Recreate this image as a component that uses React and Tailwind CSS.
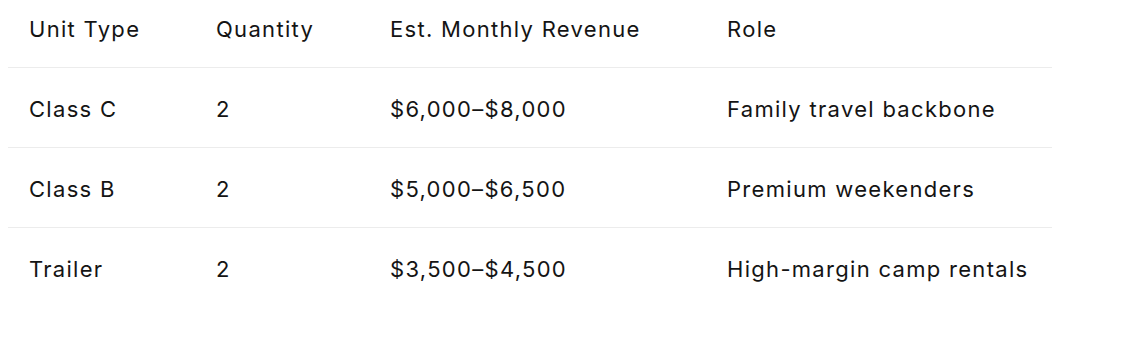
import React from 'react';

const rows = [
  { type: 'Class C', qty: '2', revenue: '$6,000–$8,000', role: 'Family travel backbone' },
  { type: 'Class B', qty: '2', revenue: '$5,000–$6,500', role: 'Premium weekenders' },
  { type: 'Trailer', qty: '2', revenue: '$3,500–$4,500', role: 'High-margin camp rentals' },
];

const App = () => {
  return (
    <div className="bg-white w-[1122px] h-[348px] pl-[8px] text-[#141414] font-['Inter','Liberation_Sans',sans-serif] text-[22px] leading-[28px] tracking-[1.3px]">
      <table className="w-[1044px] border-collapse table-fixed">
        <colgroup>
          <col className="w-[187px]" />
          <col className="w-[174px]" />
          <col className="w-[337px]" />
          <col className="w-[346px]" />
        </colgroup>
        <thead>
          <tr className="border-b border-[#ececec]">
            <th className="text-left font-normal px-[21px] pt-[15px] pb-[24px]">Unit Type</th>
            <th className="text-left font-normal px-[21px] pt-[15px] pb-[24px]">Quantity</th>
            <th className="text-left font-normal px-[21px] pt-[15px] pb-[24px]">Est. Monthly Revenue</th>
            <th className="text-left font-normal px-[21px] pt-[15px] pb-[24px]">Role</th>
          </tr>
        </thead>
        <tbody>
          {rows.map((r, i) => (
            <tr key={r.type} className={i < rows.length - 1 ? 'border-b border-[#ececec]' : ''}>
              <td className="px-[21px] pt-[27px] pb-[24px]">{r.type}</td>
              <td className="px-[21px] pt-[27px] pb-[24px]">{r.qty}</td>
              <td className="px-[21px] pt-[27px] pb-[24px]">{r.revenue}</td>
              <td className="px-[21px] pt-[27px] pb-[24px]">{r.role}</td>
            </tr>
          ))}
        </tbody>
      </table>
    </div>
  );
};

export default App;
